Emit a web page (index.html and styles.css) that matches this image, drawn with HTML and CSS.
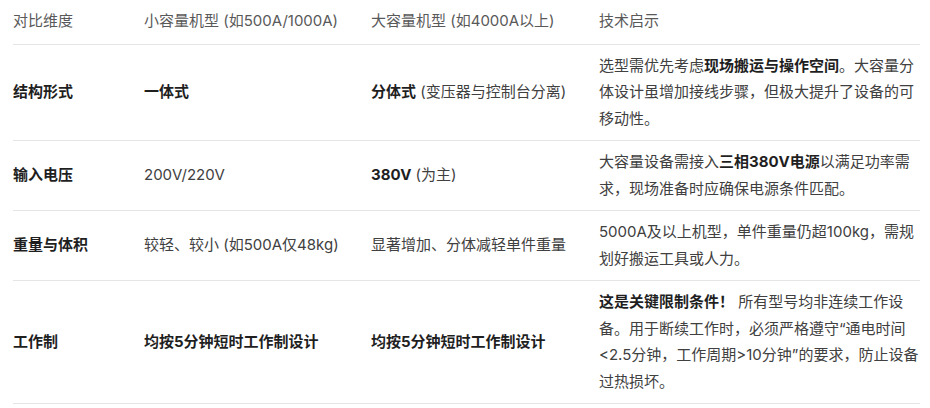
FILE: index.html
```html
<!DOCTYPE html>
<html lang="zh">
<head>
<meta charset="utf-8">
<link rel="stylesheet" href="styles.css">
</head>
<body>
<table class="cmp">
  <colgroup>
    <col class="c1"><col class="c2"><col class="c3"><col class="c4">
  </colgroup>
  <thead>
    <tr><th>对比维度</th><th>小容量机型 (如500A/1000A)</th><th>大容量机型 (如4000A以上)</th><th>技术启示</th></tr>
  </thead>
  <tbody>
    <tr>
      <td><strong>结构形式</strong></td>
      <td><strong>一体式</strong></td>
      <td><strong>分体式</strong> (变压器与控制台分离)</td>
      <td>选型需优先考虑<strong>现场搬运与操作空间</strong>。大容量分体设计虽增加接线步骤，但极大提升了设备的可移动性。</td>
    </tr>
    <tr>
      <td><strong>输入电压</strong></td>
      <td>200V/220V</td>
      <td><strong>380V</strong> (为主)</td>
      <td>大容量设备需接入<strong>三相380V电源</strong>以满足功率需求，现场准备时应确保电源条件匹配。</td>
    </tr>
    <tr>
      <td><strong>重量与体积</strong></td>
      <td>较轻、较小 (如500A仅48kg)</td>
      <td>显著增加、分体减轻单件重量</td>
      <td>5000A及以上机型，单件重量仍超100kg，需规划好搬运工具或人力。</td>
    </tr>
    <tr>
      <td><strong>工作制</strong></td>
      <td><strong>均按5分钟短时工作制设计</strong></td>
      <td><strong>均按5分钟短时工作制设计</strong></td>
      <td><strong>这是关键限制条件！</strong> 所有型号均非连续工作设备。用于断续工作时，必须严格遵守“通电时间&lt;2.5分钟，工作周期&gt;10分钟”的要求，防止设备过热损坏。</td>
    </tr>
  </tbody>
</table>
</body>
</html>
```

FILE: styles.css
```css
html, body {
  margin: 0;
  padding: 0;
  background: #ffffff;
}
body {
  padding: 0 10px 0 13px;
  font-family: Inter, "Noto Sans CJK SC", sans-serif;
  font-size: 15px;
  line-height: 26.5px;
  color: #404040;
}
.cmp {
  width: 907px;
  border-collapse: collapse;
  table-layout: fixed;
}
.c1 { width: 131px; }
.c2 { width: 227px; }
.c3 { width: 228px; }
.c4 { width: 321px; }
.cmp th,
.cmp td {
  text-align: left;
  vertical-align: middle;
  padding: 8px 4px 8px 0;
  border-bottom: 1px solid #e5e5e5;
}
.cmp th:last-child,
.cmp td:last-child {
  padding-right: 0;
}
.cmp th {
  font-weight: normal;
  color: #595959;
  padding-bottom: 9px;
}
.cmp strong {
  font-weight: 700;
  color: #1f1f1f;
}
```
